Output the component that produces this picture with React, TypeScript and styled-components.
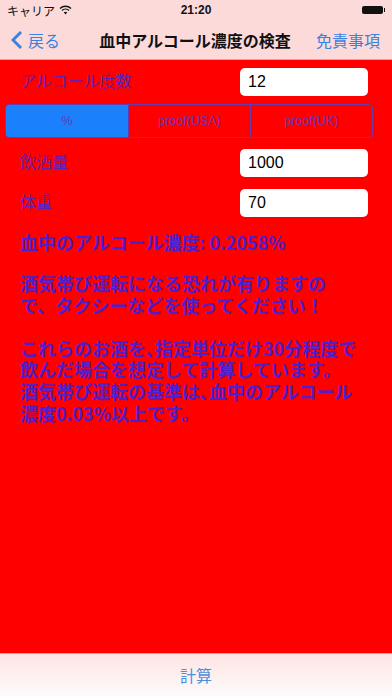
import React, { useState } from 'react';
import styled, { createGlobalStyle } from 'styled-components';

const JP = `"Noto Sans CJK JP", "Liberation Sans", sans-serif`;

const GlobalStyle = createGlobalStyle`
  html, body {
    margin: 0;
    padding: 0;
  }
  body {
    font-family: ${JP};
    background: #ffffff;
  }
`;

const Screen = styled.div`
  width: 392px;
  height: 696px;
  display: flex;
  flex-direction: column;
  overflow: hidden;
`;

const Header = styled.header`
  background: #fddada;
  border-bottom: 1px solid #f29a9a;
`;

const StatusBar = styled.div`
  height: 20px;
  display: flex;
  align-items: center;
  justify-content: space-between;
  padding: 0 9px 0 7px;
  font-size: 12px;
  color: #111;
  position: relative;
`;

const Carrier = styled.div`
  display: flex;
  align-items: center;
  gap: 4px;
`;

const Clock = styled.div`
  position: absolute;
  left: 0;
  right: 0;
  text-align: center;
  font-family: "Liberation Sans", sans-serif;
  font-weight: bold;
  font-size: 12px;
`;

const Battery = styled.div`
  width: 21px;
  height: 8px;
  background: #111;
  border-radius: 2px;
  position: relative;
  &::after {
    content: '';
    position: absolute;
    right: -2px;
    top: 2px;
    width: 1.5px;
    height: 4px;
    background: #111;
  }
`;

const NavBar = styled.nav`
  height: 39px;
  display: flex;
  align-items: center;
  justify-content: space-between;
  padding: 0 12px 0 11px;
`;

const NavButton = styled.button`
  border: none;
  background: none;
  padding: 0;
  display: flex;
  align-items: center;
  gap: 5px;
  font-family: ${JP};
  font-size: 16px;
  color: #3a82e0;
`;

const NavTitle = styled.h1`
  margin: 0 0 0 14px;
  font-size: 16px;
  font-weight: bold;
  color: #111;
`;

const Content = styled.main`
  flex: 1;
  background: #ff0000;
  padding: 8px 0 0;
  display: flex;
  flex-direction: column;
`;

const FieldRow = styled.div<{ $gap: number }>`
  display: flex;
  align-items: center;
  justify-content: space-between;
  padding: 0 24px 0 20px;
  margin-top: ${(p) => p.$gap}px;
`;

const FieldLabel = styled.label`
  font-size: 16px;
  color: #6020b8;
  margin-top: -4px;
`;

const FieldInput = styled.input`
  width: 128px;
  height: 28px;
  box-sizing: border-box;
  border: none;
  border-radius: 5px;
  background: #fff;
  padding: 0 8px;
  font-family: "Liberation Sans", sans-serif;
  font-size: 16px;
  color: #000;
  outline: none;
`;

const Segmented = styled.div`
  margin: 8px 0 0 5px;
  width: 368px;
  height: 34px;
  display: grid;
  grid-template-columns: repeat(3, 1fr);
  border: 1px solid #6a3ab0;
  border-radius: 4px;
  overflow: hidden;
  box-sizing: border-box;
`;

const Segment = styled.button<{ $active: boolean }>`
  border: none;
  border-left: 1px solid #6a3ab0;
  &:first-child {
    border-left: none;
  }
  background: ${(p) => (p.$active ? '#1a80fc' : 'transparent')};
  color: #7434b4;
  font-family: "Liberation Sans", sans-serif;
  font-size: 12.5px;
  padding: 0;
`;

const Result = styled.p`
  margin: 14px 0 0 20px;
  font-size: 18px;
  font-weight: bold;
  color: #4f1fcc;
  line-height: 22px;
`;

const Message = styled.p`
  margin: 20px 0 0 20px;
  font-size: 18px;
  font-weight: bold;
  color: #4f1fcc;
  line-height: 21.6px;
  white-space: nowrap;
`;

const Toolbar = styled.footer`
  height: 42px;
  border-top: 1px solid #f29a9a;
  background: linear-gradient(#fde4e4, #fefafa);
  display: flex;
  align-items: center;
  justify-content: center;
`;

const ToolbarButton = styled.button`
  border: none;
  background: none;
  font-family: ${JP};
  font-size: 16px;
  color: #4a8fdc;
  padding: 0;
`;

const units = ['%', 'proof(USA)', 'proof(UK)'];

const App: React.FC = () => {
  const [unit, setUnit] = useState(0);
  const [strength, setStrength] = useState('12');
  const [amount, setAmount] = useState('1000');
  const [weight, setWeight] = useState('70');

  return (
    <Screen>
      <GlobalStyle />
      <Header>
        <StatusBar>
          <Carrier>
            キャリア
            <svg width="13" height="10" viewBox="0 0 13 10">
              <path d="M1 3.5 A8 8 0 0 1 12 3.5" stroke="#111" strokeWidth="1.4" fill="none" />
              <path d="M3 5.6 A5 5 0 0 1 10 5.6" stroke="#111" strokeWidth="1.4" fill="none" />
              <path d="M6.5 9.5 L4.8 7.5 A2.5 2.5 0 0 1 8.2 7.5 Z" fill="#111" />
            </svg>
          </Carrier>
          <Clock>21:20</Clock>
          <Battery />
        </StatusBar>
        <NavBar>
          <NavButton>
            <svg width="12" height="20" viewBox="0 0 12 20">
              <path d="M10 2 L2 10 L10 18" stroke="#3a82e0" strokeWidth="3" fill="none" />
            </svg>
            戻る
          </NavButton>
          <NavTitle>血中アルコール濃度の検査</NavTitle>
          <NavButton>免責事項</NavButton>
        </NavBar>
      </Header>
      <Content>
        <FieldRow $gap={0}>
          <FieldLabel>アルコール度数</FieldLabel>
          <FieldInput value={strength} onChange={(e) => setStrength(e.target.value)} />
        </FieldRow>
        <Segmented>
          {units.map((u, i) => (
            <Segment key={u} $active={i === unit} onClick={() => setUnit(i)}>
              {u}
            </Segment>
          ))}
        </Segmented>
        <FieldRow $gap={11}>
          <FieldLabel>飲酒量</FieldLabel>
          <FieldInput value={amount} onChange={(e) => setAmount(e.target.value)} />
        </FieldRow>
        <FieldRow $gap={12}>
          <FieldLabel>体重</FieldLabel>
          <FieldInput value={weight} onChange={(e) => setWeight(e.target.value)} />
        </FieldRow>
        <Result>血中のアルコール濃度: 0.2058%</Result>
        <Message>
          酒気帯び運転になる恐れが有りますの
          <br />
          で、タクシーなどを使ってください！
          <br />
          <br />
          これらのお酒を､指定単位だけ30分程度で
          <br />
          飲んだ場合を想定して計算しています。
          <br />
          酒気帯び運転の基準は､血中のアルコール
          <br />
          濃度0.03%以上です。
        </Message>
      </Content>
      <Toolbar>
        <ToolbarButton>計算</ToolbarButton>
      </Toolbar>
    </Screen>
  );
};

export default App;
